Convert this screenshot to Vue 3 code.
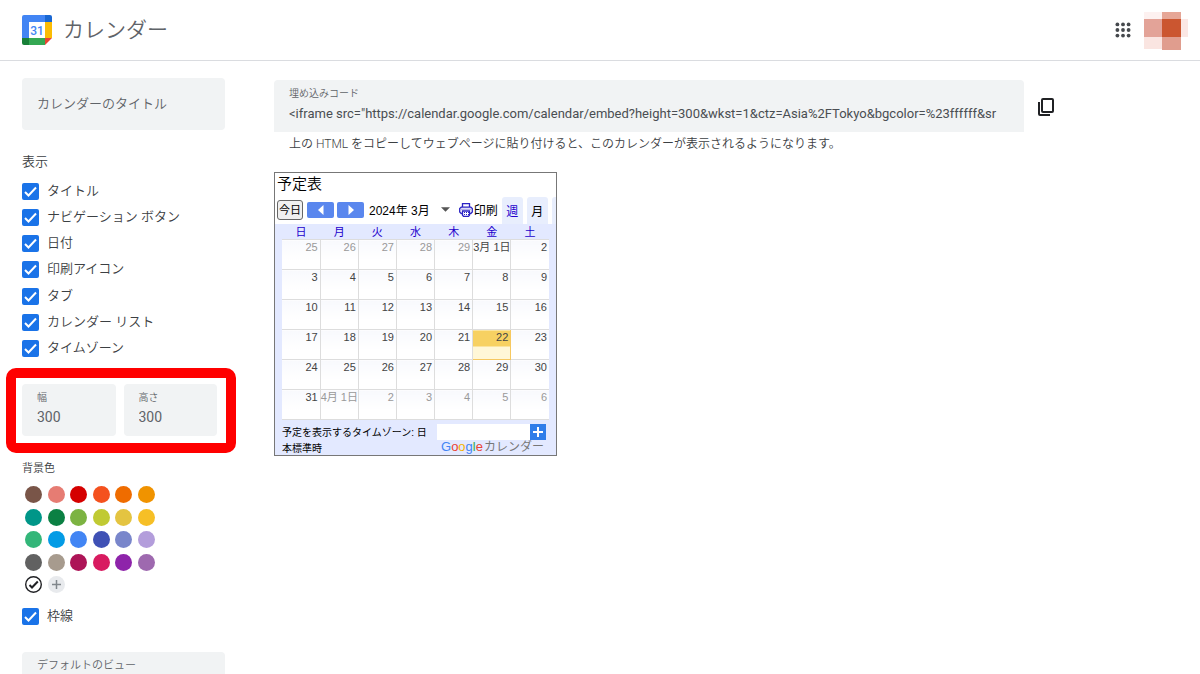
<script setup>
import { ref } from 'vue'

const options = ref([
  { id: 'title', label: 'タイトル', on: true },
  { id: 'nav', label: 'ナビゲーション ボタン', on: true },
  { id: 'date', label: '日付', on: true },
  { id: 'print', label: '印刷アイコン', on: true },
  { id: 'tabs', label: 'タブ', on: true },
  { id: 'list', label: 'カレンダー リスト', on: true },
  { id: 'tz', label: 'タイムゾーン', on: true },
])
const border = ref(true)
const calendarTitle = ref('')
const width = ref('300')
const height = ref('300')
const code =
  '<iframe src="https://calendar.google.com/calendar/embed?height=300&wkst=1&ctz=Asia%2FTokyo&bgcolor=%23ffffff&sr'

const colors = [
  '#795548', '#e67c73', '#d50000', '#f4511e', '#ef6c00', '#f09300',
  '#009688', '#0b8043', '#7cb342', '#c0ca33', '#e4c441', '#f6bf26',
  '#33b679', '#039be5', '#4285f4', '#3f51b5', '#7986cb', '#b39ddb',
  '#616161', '#a79b8e', '#ad1457', '#d81b60', '#8e24aa', '#9e69af',
]

const weekdays = ['日', '月', '火', '水', '木', '金', '土']
const weeks = [
  ['25', '26', '27', '28', '29', '3月 1日', '2'],
  ['3', '4', '5', '6', '7', '8', '9'],
  ['10', '11', '12', '13', '14', '15', '16'],
  ['17', '18', '19', '20', '21', '22', '23'],
  ['24', '25', '26', '27', '28', '29', '30'],
  ['31', '4月 1日', '2', '3', '4', '5', '6'],
]
const isOther = (w, d) => (w === 0 && d < 5) || (w === 5 && d > 0)
const isToday = (w, d) => w === 3 && d === 5
</script>

<template>
  <div class="page">
    <header class="topbar">
      <svg class="logo" viewBox="0 0 30 30" aria-hidden="true">
        <path d="M2 0H23V7H7V23H0V2Q0 0 2 0Z" fill="#4285f4" />
        <path d="M23 0H28Q30 0 30 2V7H23Z" fill="#1967d2" />
        <path d="M23 7H30V23H23Z" fill="#fbbc04" />
        <path d="M7 23H23V30H7Z" fill="#34a853" />
        <path d="M0 23H7V30H2Q0 30 0 28Z" fill="#188038" />
        <path d="M23 23H30L23 30Z" fill="#ea4335" />
        <path d="M7 7H23V23H7Z" fill="#fff" />
        <text x="15" y="20" text-anchor="middle">31</text>
      </svg>
      <h1>カレンダー</h1>
      <button class="apps" type="button" aria-label="アプリ">
        <svg viewBox="0 0 18 18">
          <template v-for="y in 3" :key="y">
            <circle v-for="x in 3" :key="x" :cx="x * 5.6 - 2.2" :cy="y * 5.6 - 2.2" r="1.9" />
          </template>
        </svg>
      </button>
      <button class="avatar" type="button" aria-label="アカウント">
        <svg viewBox="0 0 44 38">
          <path d="M0 0H18V7H0Z" fill="#fdf1f0" />
          <path d="M18 0H37V7H18Z" fill="#e6a696" />
          <path d="M0 7H18V25H0Z" fill="#e3a398" />
          <path d="M18 7H37V25H18Z" fill="#cb5630" />
          <path d="M37 7H44V25H37Z" fill="#fbe7e4" />
          <path d="M0 25H18V37H0Z" fill="#fae5e1" />
          <path d="M18 25H37V38H18Z" fill="#e09d8e" />
        </svg>
      </button>
    </header>

    <div class="layout">
      <aside class="sidebar">
        <input v-model="calendarTitle" class="title-input" type="text" placeholder="カレンダーのタイトル" aria-label="カレンダーのタイトル" />

        <h2>表示</h2>
        <div class="checks">
          <label v-for="o in options" :key="o.id" class="check">
            <span class="box">
              <input v-model="o.on" type="checkbox" />
              <svg viewBox="0 0 17 17"><path d="M3 9L6.500 12.500L14 4.500" /></svg>
            </span>
            <span>{{ o.label }}</span>
          </label>
        </div>

        <div class="dims">
          <label class="field">
            <span>幅</span>
            <input v-model="width" type="text" />
          </label>
          <label class="field">
            <span>高さ</span>
            <input v-model="height" type="text" />
          </label>
        </div>

        <h3>背景色</h3>
        <div class="swatches">
          <button v-for="c in colors" :key="c" type="button" class="swatch" :style="{ background: c }" :aria-label="c"></button>
          <button type="button" class="swatch picked" aria-label="白">
            <svg viewBox="0 0 17 17">
              <circle cx="8.500" cy="8.500" r="7.800" />
              <path d="M4.500 9L7 11.500L12.800 5.500" />
            </svg>
          </button>
          <button type="button" class="swatch add" aria-label="色を追加">
            <svg viewBox="0 0 17 17"><path d="M8.500 4V13M4 8.500H13" /></svg>
          </button>
        </div>

        <label class="check border-check">
          <span class="box">
            <input v-model="border" type="checkbox" />
            <svg viewBox="0 0 17 17"><path d="M3 9L6.500 12.500L14 4.500" /></svg>
          </span>
          <span>枠線</span>
        </label>

        <label class="field view">
          <span>デフォルトのビュー</span>
          <select><option>月</option></select>
        </label>
      </aside>

      <main class="content">
        <div class="code-row">
          <label class="field code">
            <span>埋め込みコード</span>
            <input type="text" readonly :value="code" />
          </label>
          <button class="copy" type="button" aria-label="コピー">
            <svg viewBox="0 0 16 18">
              <rect x="4" y="1" width="11" height="13" rx="1" />
              <path d="M1 4V16Q1 17 2 17H12" />
            </svg>
          </button>
        </div>
        <p class="hint">上の HTML をコピーしてウェブページに貼り付けると、このカレンダーが表示されるようになります。</p>

        <section class="calendar">
          <h2 class="cal-title">予定表</h2>
          <div class="nav">
            <button type="button" class="now">今日</button>
            <button type="button" class="step" aria-label="前へ">
              <svg viewBox="0 0 6 10"><path d="M5.500 0V10L0 5Z" /></svg>
            </button>
            <button type="button" class="step" aria-label="次へ">
              <svg viewBox="0 0 6 10"><path d="M.5 0V10L6 5Z" /></svg>
            </button>
            <button type="button" class="month">
              <span>2024年 3月</span>
              <svg viewBox="0 0 10 5"><path d="M0 0H10L5 5Z" /></svg>
            </button>
            <button type="button" class="print">
              <svg viewBox="0 0 14 14">
                <path d="M3.500 4V.7H10.500V4M3.500 10.500H2.200L.7 9V5.500L2.200 4.200H11.800L13.300 5.500V9L11.800 10.500H10.500M3.500 8H10.500V12.300L9.500 13.300H4.500L3.500 12.300Z" />
                <path class="dots" d="M5 9.500H10M5 11.500H10M2.500 6.200H12" />
              </svg>
              <span>印刷</span>
            </button>
            <button type="button" class="tab week">週</button>
            <button type="button" class="tab">月</button>
            <span class="tab"></span>
          </div>
          <div class="cal-body">
            <table>
              <thead>
                <tr><th v-for="d in weekdays" :key="d">{{ d }}</th></tr>
              </thead>
              <tbody>
                <tr v-for="(w, wi) in weeks" :key="wi">
                  <td v-for="(d, di) in w" :key="di" :class="{ other: isOther(wi, di), today: isToday(wi, di) }">
                    <span>{{ d }}</span>
                  </td>
                </tr>
              </tbody>
            </table>
            <div class="cal-foot">
              <p>予定を表示するタイムゾーン: 日本標準時</p>
              <div class="brand">
                <div class="add-row">
                  <button type="button" aria-label="追加">
                    <svg viewBox="0 0 16 16"><path d="M8 3V13M3 8H13" /></svg>
                  </button>
                </div>
                <a href="#"><b class="g">G</b><b class="r">o</b><b class="y">o</b><b class="g">g</b><b class="l">l</b><b class="r">e</b><span>カレンダー</span></a>
              </div>
            </div>
          </div>
        </section>
      </main>
    </div>
  </div>
</template>

<style>
body {
  margin: 0;
  background: #fff;
}
</style>

<style scoped>
.page {
  height: 100vh;
  overflow: hidden;
  color: #3c4043;
  font-family: Roboto, "Noto Sans CJK JP", sans-serif;
  font-size: 13px;
  font-weight: 350;
}
* {
  box-sizing: border-box;
}
button,
input,
select {
  margin: 0;
  padding: 0;
  border: 0;
  background: none;
  color: inherit;
  font: inherit;
}
input,
select {
  outline: 0;
}
h1,
h2,
h3,
p {
  margin: 0;
  font-weight: 350;
}
svg {
  display: block;
}

.topbar {
  display: flex;
  align-items: center;
  height: 61px;
  padding: 0 12px 0 22px;
  border-bottom: 1px solid #dadce0;
}
.logo {
  width: 30px;
  height: 30px;
}
.logo text {
  fill: #4285f4;
  font: 500 12px Roboto, sans-serif;
}
h1 {
  flex: 1;
  margin-left: 11px;
  color: #5f6368;
  font-size: 21px;
  line-height: 30px;
}
.apps svg {
  width: 18px;
  height: 18px;
  fill: #45494d;
}
.avatar {
  margin: 2px 0 0 12px;
}
.avatar svg {
  width: 44px;
  height: 38px;
}

.layout {
  display: flex;
}
.sidebar {
  flex: none;
  width: 225px;
  padding: 17px 0 0 22px;
}
.title-input {
  display: block;
  width: 100%;
  height: 52px;
  padding: 0 15px 2px;
  border-radius: 4px;
  background: #f1f3f4;
}
.title-input::placeholder {
  color: #5f6368;
  opacity: 1;
}
.sidebar h2 {
  margin: 22px 0 6px;
  font-size: 13px;
  line-height: 20px;
}
.check {
  display: flex;
  align-items: center;
  height: 26px;
  gap: 8px;
}
.check > span:last-child {
  line-height: 20px;
  padding-bottom: 1px;
}
.checks {
  display: flex;
  flex-direction: column;
  justify-content: space-between;
  height: 184px;
}
.box {
  display: grid;
  width: 17px;
  height: 17px;
}
.box > * {
  grid-area: 1 / 1;
  width: 17px;
  height: 17px;
}
.box input {
  appearance: none;
  border-radius: 2px;
  background: #1a73e8;
}
.box svg {
  fill: none;
  stroke: #fff;
  stroke-width: 2;
  pointer-events: none;
}

.dims {
  position: relative;
  display: flex;
  gap: 8px;
  margin: 22px 8px 0 0;
}
.dims::after {
  content: "";
  position: absolute;
  inset: -16px -19px -17px -16px;
  border: 10px solid #f00;
  border-radius: 10px;
  pointer-events: none;
}
.field {
  display: flex;
  flex: 1;
  flex-direction: column;
  min-width: 0;
  height: 52px;
  padding: 6px 15px 4px;
  border-radius: 4px;
  background: #f1f3f4;
}
.field > span {
  color: #5f6368;
  font-size: 10px;
  line-height: 16px;
}
.field input {
  width: 100%;
  height: 22px;
  font-size: 14px;
  font-weight: 400;
  color: #5f6368;
}
.sidebar h3 {
  margin: 24px 0 8px;
  font-size: 11px;
  line-height: 18px;
}
.swatches {
  display: grid;
  grid-template-columns: repeat(6, 17px);
  justify-content: space-between;
  align-content: space-between;
  width: 130px;
  height: 107px;
  margin-left: 3px;
}
.swatch {
  width: 17px;
  height: 17px;
  border-radius: 50%;
}
.swatch svg {
  width: 17px;
  height: 17px;
  fill: none;
}
.picked {
  color: #202124;
}
.picked svg {
  stroke: currentColor;
  stroke-width: 1.4;
}
.picked path {
  stroke-width: 2;
}
.add {
  background: #e8eaed;
}
.add svg {
  stroke: #80868b;
  stroke-width: 1.5;
}
.border-check {
  margin-top: 10px;
}
.view {
  margin-top: 23px;
}
.view > span {
  font-size: 11px;
}
.view select {
  appearance: none;
  height: 22px;
}

.content {
  flex: 1;
  min-width: 0;
  padding: 19px 146px 0 49px;
}
.code-row {
  display: flex;
  align-items: center;
  gap: 14px;
}
.code {
  border-radius: 4px 4px 0 0;
}
.field.code input {
  color: #4a4e52;
  font-size: 13px;
}
.copy {
  padding-top: 2px;
}
.copy svg {
  width: 16px;
  height: 18px;
  fill: none;
  stroke: #202124;
  stroke-width: 2;
}
.hint {
  padding-left: 15px;
  margin-top: 3px;
  font-size: 12px;
  line-height: 18px;
}

.calendar {
  width: 283px;
  margin-top: 19px;
  overflow: hidden;
  border: 1px solid #777;
  color: #000;
  font-family: "Liberation Sans", "Noto Sans CJK JP", sans-serif;
  font-size: 12px;
  font-weight: 400;
}
.cal-title {
  padding-left: 2px;
  font-size: 15px;
  line-height: 22px;
}
.nav {
  display: flex;
  align-items: center;
  height: 29px;
  padding-left: 2px;
  white-space: nowrap;
}
.nav > * {
  flex: none;
}
.now {
  width: 26px;
  height: 20px;
  margin-right: 4px;
  border: 1px solid #666;
  border-radius: 3px;
  background: #f0f0f0;
  font-size: 11px;
  line-height: 16px;
}
.step {
  display: grid;
  place-items: center;
  width: 27px;
  height: 16px;
  margin-right: 3px;
  border-radius: 2px;
  background: #5a87ee;
}
.step svg {
  width: 6px;
  height: 10px;
  fill: #fff;
}
.month {
  display: flex;
  align-items: center;
  gap: 11px;
  margin-left: 2px;
}
.month svg {
  width: 9px;
  height: 5px;
  fill: #555;
}
.print {
  display: flex;
  align-items: center;
  gap: 1px;
  margin-left: 9px;
}
.print svg {
  width: 14px;
  height: 14px;
  fill: none;
  stroke: #2a22c4;
  stroke-width: 1.3;
}
.print .dots {
  stroke-width: 1;
  stroke-dasharray: 1 1;
}
.tab {
  align-self: flex-end;
  width: 21px;
  height: 27px;
  margin-left: 4px;
  border-radius: 3px 3px 0 0;
  background: #e8eefd;
}
.week {
  color: #20c;
}
.cal-body {
  padding: 2px 7px 0;
  background: #e3e9ff;
}
table {
  width: 267px;
  border-collapse: collapse;
  table-layout: fixed;
}
th {
  height: 13px;
  padding: 0;
  color: #20c;
  font-size: 11px;
  font-weight: 400;
  line-height: 13px;
}
td {
  height: 30px;
  padding: 0;
  border: 1px solid #ddd;
  background: linear-gradient(#f8f9fd 0, #fff 20px);
  color: #444;
  font-size: 11px;
  line-height: 15px;
  text-align: right;
  vertical-align: top;
  white-space: nowrap;
}
td:first-child {
  border-left: 0;
}
td:last-child {
  border-right: 0;
}
td span {
  padding-right: 2px;
}
td.other {
  color: #999;
}
td.today {
  border: 1px solid #f6c860;
  background: linear-gradient(#f7d162 0 16px, #fff7d7 16px);
}
.cal-foot {
  display: flex;
  gap: 4px;
  height: 35px;
  padding-top: 4px;
}
.cal-foot p {
  width: 151px;
  padding-top: 1px;
  font-size: 10px;
  font-weight: 400;
  line-height: 16px;
}
.brand {
  width: 109px;
}
.add-row {
  display: flex;
  justify-content: flex-end;
  height: 16px;
  background: #fff;
}
.add-row button {
  background: #2f7de9;
}
.add-row svg {
  width: 16px;
  height: 16px;
  stroke: #fff;
  stroke-width: 2;
}
.brand a {
  display: flex;
  align-items: center;
  height: 14px;
  padding-left: 4px;
  color: #777;
  font-size: 13px;
  line-height: 14px;
  text-decoration: none;
}
.brand a span {
  margin-left: 1px;
  font-size: 12px;
}
.brand b {
  font-weight: 400;
}
.g {
  color: #4285f4;
}
.r {
  color: #ea4335;
}
.y {
  color: #f4b400;
}
.l {
  color: #34a853;
}
</style>
